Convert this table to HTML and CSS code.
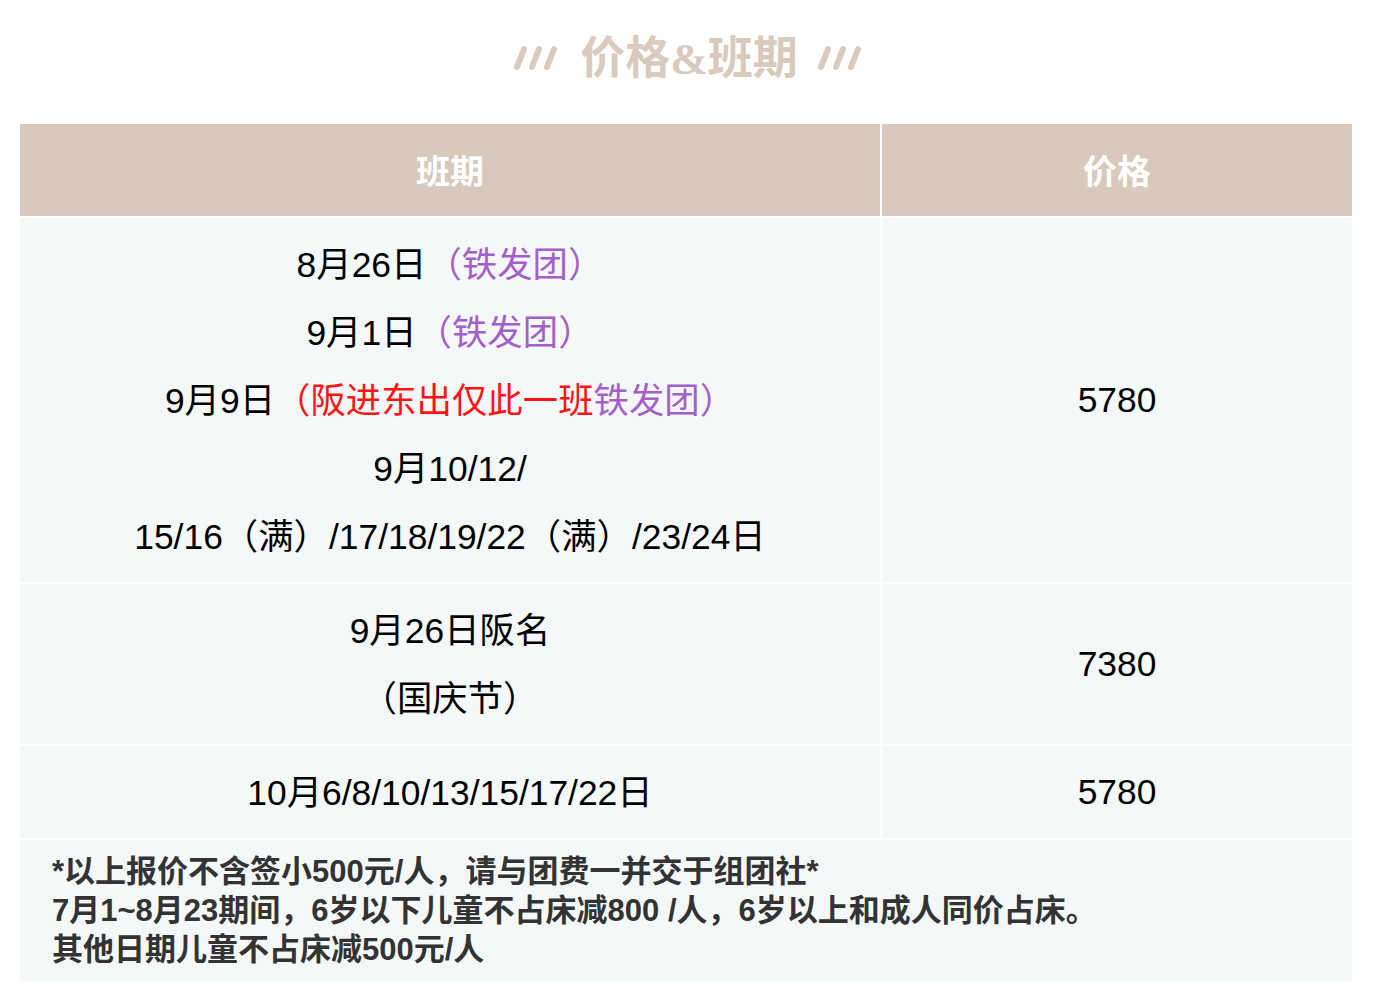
FILE: index.html
```html
<!DOCTYPE html>
<html lang="zh-CN">
<head>
<meta charset="utf-8">
<title>价格&amp;班期</title>
<link rel="stylesheet" href="styles.css">
</head>
<body>
<div class="title">
  <svg class="slashes" width="46" height="26" viewBox="0 0 46 26"><g stroke="#d9cabe" stroke-width="6" stroke-linecap="round"><line x1="3" y1="22" x2="10" y2="4"/><line x1="18" y1="22" x2="25" y2="4"/><line x1="33" y1="22" x2="40" y2="4"/></g></svg>
  <h1 class="title-text">价格<span class="amp">&amp;</span>班期</h1>
  <svg class="slashes" width="46" height="26" viewBox="0 0 46 26"><g stroke="#d9cabe" stroke-width="6" stroke-linecap="round"><line x1="3" y1="22" x2="10" y2="4"/><line x1="18" y1="22" x2="25" y2="4"/><line x1="33" y1="22" x2="40" y2="4"/></g></svg>
</div>
<div class="table">
  <div class="th">班期</div>
  <div class="th">价格</div>

  <div class="td dates">
    <div>8月26日<span class="purple">（铁发团）</span></div>
    <div>9月1日<span class="purple">（铁发团）</span></div>
    <div>9月9日<span class="red">（阪进东出仅此一班</span><span class="purple">铁发团）</span></div>
    <div>9月10/12/</div>
    <div>15/16（满）/17/18/19/22（满）/23/24日</div>
  </div>
  <div class="td price">5780</div>

  <div class="td dates">
    <div>9月26日阪名</div>
    <div>（国庆节）</div>
  </div>
  <div class="td price">7380</div>

  <div class="td dates">
    <div>10月6/8/10/13/15/17/22日</div>
  </div>
  <div class="td price">5780</div>

  <div class="note">
    <div>*以上报价不含签小500元/人，请与团费一并交于组团社*</div>
    <div>7月1~8月23期间，6岁以下儿童不占床减800 /人，6岁以上和成人同价占床。</div>
    <div>其他日期儿童不占床减500元/人</div>
  </div>
</div>
</body>
</html>
```

FILE: styles.css
```css
html, body {
  margin: 0;
  padding: 0;
  background: #ffffff;
}
body {
  font-family: "Liberation Sans", "Noto Sans CJK SC", sans-serif;
  color: #000;
}
.title {
  height: 114px;
  margin-bottom: 10px;
  display: flex;
  align-items: center;
  justify-content: center;
  gap: 20px;
}
.slashes {
  display: block;
  margin-top: 2px;
}
.title-text {
  margin: 0;
  font-family: "Noto Sans CJK SC", sans-serif;
  font-weight: 700;
  font-size: 45px;
  line-height: 60px;
  color: #d9cabe;
}
.amp {
  font-family: "Liberation Serif", serif;
  font-weight: 700;
  font-size: 45px;
}
.table {
  margin-left: 20px;
  width: 1332px;
  display: grid;
  grid-template-columns: 860px 470px;
  gap: 2px;
  background: #ffffff;
}
.th {
  height: 92px;
  background: #d8c9bd;
  color: #ffffff;
  font-family: "Noto Sans CJK SC", sans-serif;
  font-weight: 700;
  font-size: 34px;
  display: flex;
  align-items: center;
  justify-content: center;
  padding-bottom: 2px;
  box-sizing: border-box;
}
.td {
  background: #f5f8f9;
  font-size: 35.4px;
  line-height: 68px;
  padding: 12px 0;
  text-align: center;
}
.dates {
  padding-top: 13px;
  padding-bottom: 11px;
}
.price {
  display: flex;
  align-items: center;
  justify-content: center;
}
.purple {
  color: #a45fca;
}
.red {
  color: #ff1414;
}
.note {
  grid-column: 1 / span 2;
  background: #f5f8f9;
  padding: 12px 32px;
  font-size: 31px;
  line-height: 39px;
  font-weight: 700;
  color: #333333;
}
```
